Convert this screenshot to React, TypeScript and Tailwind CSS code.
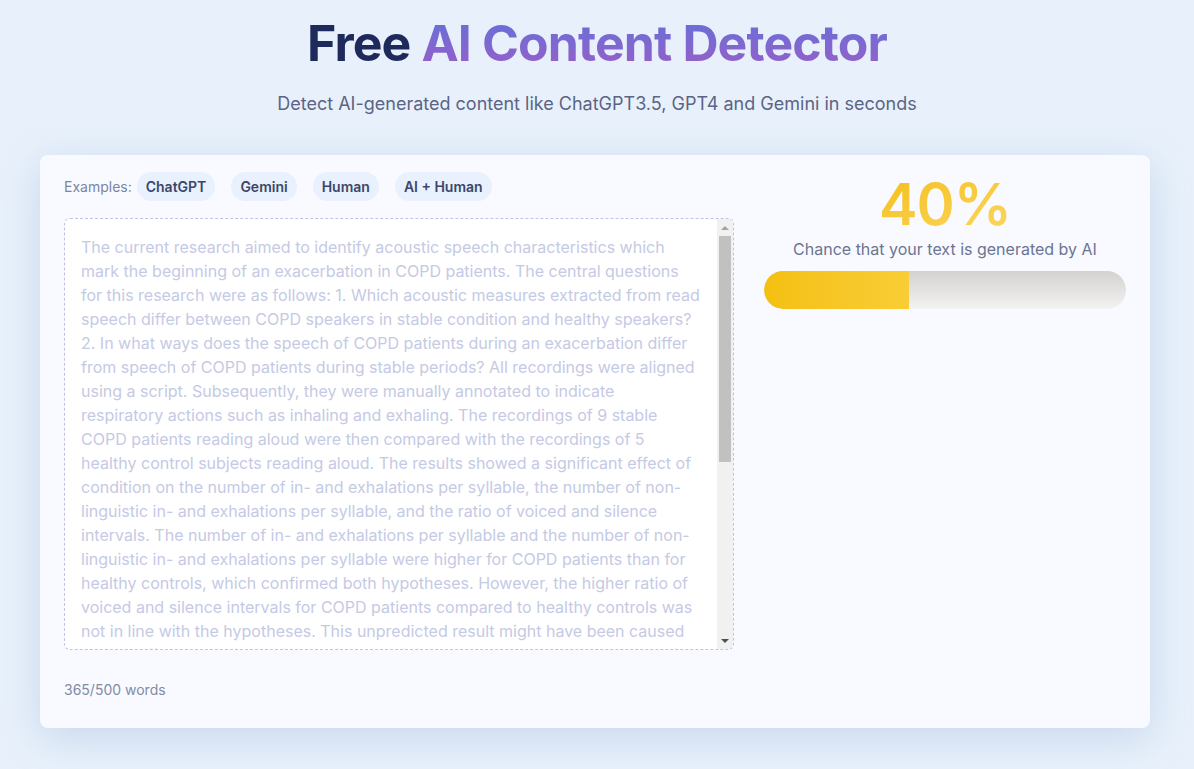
import React from 'react'

const EXAMPLES = ['ChatGPT', 'Gemini', 'Human', 'AI + Human']

const SAMPLE =
  'The current research aimed to identify acoustic speech characteristics which mark the beginning of an exacerbation in COPD patients. The central questions for this research were as follows: 1. Which acoustic measures extracted from read speech differ between COPD speakers in stable condition and healthy speakers? 2. In what ways does the speech of COPD patients during an exacerbation differ from speech of COPD patients during stable periods? All recordings were aligned using a script. Subsequently, they were manually annotated to indicate respiratory actions such as inhaling and exhaling. The recordings of 9 stable COPD patients reading aloud were then compared with the recordings of 5 healthy control subjects reading aloud. The results showed a significant effect of condition on the number of in- and exhalations per syllable, the number of non-linguistic in- and exhalations per syllable, and the ratio of voiced and silence intervals. The number of in- and exhalations per syllable and the number of non-linguistic in- and exhalations per syllable were higher for COPD patients than for healthy controls, which confirmed both hypotheses. However, the higher ratio of voiced and silence intervals for COPD patients compared to healthy controls was not in line with the hypotheses. This unpredicted result might have been caused by the different reading abilities of the participants, and by the small number of recordings that were available for the analysis.'

function Pill({ label }: { label: string }) {
  return (
    <button className="h-[29px] rounded-full bg-[#e8f1fd] px-[9px] text-[14px] font-semibold text-[#3d4669]">
      {label}
    </button>
  )
}

// classic scrollbar look, drawn since the headless page hides native ones
function FakeScrollbar() {
  return (
    <div className="flex w-[16px] shrink-0 flex-col bg-[#f1f1f1]">
      <div className="flex h-[17px] items-center justify-center">
        <div className="h-0 w-0 border-x-[4px] border-b-[4px] border-x-transparent border-b-[#a3a3a3]" />
      </div>
      <div className="mx-[2px] h-[226px] bg-[#c1c1c1]" />
      <div className="flex-1" />
      <div className="flex h-[17px] items-center justify-center">
        <div className="h-0 w-0 border-x-[4px] border-t-[4px] border-x-transparent border-t-[#505050]" />
      </div>
    </div>
  )
}

export default function App() {
  const score = 40
  return (
    <div className="min-h-screen bg-[#e8f1fb] font-['Inter',sans-serif] pb-10">
      {/* Header */}
      <header className="pt-[14px] text-center">
        <h1 className="text-[50px] font-bold leading-[58px] tracking-[-0.9px]">
          <span className="text-[#1f2a5c]">Free </span>
          <span className="bg-gradient-to-b from-[#5a72da] to-[#9a5bc7] bg-clip-text text-transparent">AI Content Detector</span>
        </h1>
        <p className="mt-[18px] text-[18px] leading-[28px] text-[#5b6485]">
          Detect AI-generated content like ChatGPT3.5, GPT4 and Gemini in seconds
        </p>
      </header>

      {/* Card */}
      <main className="ml-[40px] mt-[37px] w-[1110px] rounded-lg bg-[#f8faff] px-6 pt-[17px] pb-[28px] shadow-[0_10px_40px_rgba(120,150,200,0.28)]">
        <div className="flex gap-[30px]">
          {/* Left */}
          <div className="w-[670px] shrink-0">
            <div className="flex h-[29px] items-center gap-4">
              <div className="flex items-center gap-[5px]">
                <span className="text-[14px] text-[#7c84a3]">Examples:</span>
                <Pill label={EXAMPLES[0]} />
              </div>
              {EXAMPLES.slice(1).map(e => (
                <Pill key={e} label={e} />
              ))}
            </div>

            <div className="mt-[17px] flex h-[432px] overflow-hidden rounded-md border border-dashed border-[#bfc3e3] bg-white">
              <div className="flex-1 overflow-hidden pl-4 pr-[17px] pt-4 text-[16px] leading-[24px] text-[#c5cae4]">
                {SAMPLE}
              </div>
              <FakeScrollbar />
            </div>

            <p className="mt-[30px] text-[14px] leading-[20px] text-[#828aa6]">365/500 words</p>
          </div>

          {/* Right */}
          <div className="flex flex-1 flex-col items-center">
            <div className="mt-[3px] bg-gradient-to-br from-[#f4bf10] to-[#fcd75a] bg-clip-text text-[58px] font-semibold leading-[58px] tracking-[-1px] text-transparent">
              {score}%
            </div>
            <p className="mt-[4px] text-[16px] leading-[24px] text-[#6c7493]">Chance that your text is generated by AI</p>
            <div className="mt-[10px] h-[38px] w-full overflow-hidden rounded-full bg-gradient-to-b from-[#d4d2d0] to-[#f3f3f3]">
              <div
                className="h-full rounded-l-full bg-gradient-to-r from-[#f4c010] to-[#f9cd35]"
                style={{ width: `${score}%` }}
              />
            </div>
          </div>
        </div>
      </main>
    </div>
  )
}
